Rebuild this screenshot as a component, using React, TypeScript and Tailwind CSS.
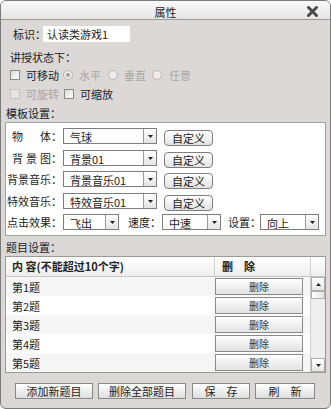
import React from "react";

const TEXT = "text-[11px] leading-[16px] text-[#1c1c1c] whitespace-nowrap";

function Checkbox({ disabled }: { disabled?: boolean }) {
  return (
    <span
      className={
        disabled
          ? "w-[10px] h-[10px] shrink-0 border border-[#c4c1c0] bg-[#e6e3e2]"
          : "w-[10px] h-[10px] shrink-0 border border-[#8a8a8a] bg-gradient-to-br from-[#dcdcdc] to-white"
      }
    />
  );
}

function Radio({ checked }: { checked?: boolean }) {
  return (
    <span className="w-[10px] h-[10px] shrink-0 rounded-full border border-[#b9b6b5] bg-[#eeebea] flex items-center justify-center">
      {checked && <span className="w-[4px] h-[4px] rounded-full bg-[#a3a3a3]" />}
    </span>
  );
}

function Arrow() {
  return (
    <svg width="5" height="3" viewBox="0 0 5 3">
      <path d="M0 0h5L2.5 3z" fill="#222" />
    </svg>
  );
}

function Select({ value, className }: { value: string; className: string }) {
  return (
    <div className={`flex h-[16px] shrink-0 border border-[#7d7d7d] bg-white ${className}`}>
      <span className={`flex-1 pl-[6px] ${TEXT} leading-[14px]`}>{value}</span>
      <span className="w-[13px] border-l border-[#9a9a9a] bg-gradient-to-b from-white to-[#e4e4e4] flex items-center justify-center">
        <Arrow />
      </span>
    </div>
  );
}

function CustomBtn() {
  return (
    <button className="w-[49px] h-[16px] shrink-0 rounded-[4px] border border-[#7e7e7e] bg-gradient-to-b from-white to-[#e2e2e2] text-[11px] leading-[14px] text-[#222]">
      自定义
    </button>
  );
}

function Label({ text }: { text: string }) {
  return <span className={`w-[56px] shrink-0 ${TEXT}`}>{text}</span>;
}

function SpreadLabel({ chars }: { chars: string[] }) {
  return (
    <span className={`w-[56px] shrink-0 flex ${TEXT}`}>
      <span className="w-[44px] pl-[5px] flex justify-between">
        {chars.map((c) => (
          <span key={c}>{c}</span>
        ))}
      </span>
      <span>：</span>
    </span>
  );
}

function BottomBtn({ text, className }: { text: string; className: string }) {
  return (
    <button
      className={`h-[16px] shrink-0 border border-[#8a8a8a] bg-gradient-to-b from-white to-[#dedede] text-[11px] leading-[14px] text-[#222] whitespace-nowrap ${className}`}
    >
      {text}
    </button>
  );
}

const questions = ["第1题", "第2题", "第3题", "第4题", "第5题"];

export default function App() {
  return (
    <div className="w-[331px] h-[409px] flex flex-col overflow-hidden rounded-[6px] border border-[#7a7a7a] bg-[#dcd8d7] font-['Noto_Sans_CJK_SC',sans-serif]">
      {/* Title bar */}
      <div className="relative h-[19px] shrink-0 border-b border-[#9d9a99] bg-gradient-to-b from-[#fbfbfb] to-[#e6e4e4] flex justify-center pt-[3px]">
        <span className="text-[11px] leading-[16px] text-[#222]">属性</span>
        <svg className="absolute right-[12px] top-[5px]" width="11" height="11" viewBox="0 0 11 11">
          <path d="M1.5 1.5l8 8M9.5 1.5l-8 8" stroke="#4b4b4b" strokeWidth="3" strokeLinecap="round" />
        </svg>
      </div>

      <div className="flex flex-col pl-[4px]">
        {/* 标识 */}
        <div className="mt-[6px] h-[16px] flex items-center">
          <span className={`ml-[8px] w-[30px] shrink-0 ${TEXT}`}>标识：</span>
          <span className={`w-[87px] h-[16px] bg-white pl-[4px] ${TEXT}`}>认读类游戏1</span>
        </div>

        <div className={`mt-[7px] h-[16px] ml-[5px] ${TEXT}`}>讲授状态下：</div>

        <div className="mt-[2px] h-[16px] ml-[5px] flex items-center">
          <span className="w-[53px] shrink-0 flex items-center gap-[6px]">
            <Checkbox />
            <span className={TEXT}>可移动</span>
          </span>
          <span className="w-[45px] shrink-0 flex items-center gap-[6px]">
            <Radio checked />
            <span className={`${TEXT} text-[#aaa6a5]`}>水平</span>
          </span>
          <span className="w-[44px] shrink-0 flex items-center gap-[6px]">
            <Radio />
            <span className={`${TEXT} text-[#aaa6a5]`}>垂直</span>
          </span>
          <span className="flex items-center gap-[7px]">
            <Radio />
            <span className={`${TEXT} text-[#aaa6a5]`}>任意</span>
          </span>
        </div>

        <div className="mt-[3px] h-[16px] ml-[5px] flex items-center">
          <span className="w-[54px] shrink-0 flex items-center gap-[6px]">
            <Checkbox disabled />
            <span className={`${TEXT} text-[#aaa6a5]`}>可旋转</span>
          </span>
          <span className="flex items-center gap-[6px]">
            <Checkbox />
            <span className={TEXT}>可缩放</span>
          </span>
        </div>

        <div className={`mt-[3px] h-[16px] ml-[1px] ${TEXT}`}>模板设置：</div>

        {/* Template panel */}
        <div className="mt-[1px] w-[321px] border border-[#a3a0a0] bg-white pl-[1px] pt-[5px] pb-[5px] flex flex-col">
          <div className="h-[16px] flex items-center">
            <SpreadLabel chars={["物", "体"]} />
            <Select value="气球" className="w-[94px]" />
            <span className="ml-[7px]"><CustomBtn /></span>
          </div>
          <div className="mt-[6px] h-[16px] flex items-center">
            <SpreadLabel chars={["背", "景", "图"]} />
            <Select value="背景01" className="w-[94px]" />
            <span className="ml-[7px]"><CustomBtn /></span>
          </div>
          <div className="mt-[5px] h-[16px] flex items-center">
            <Label text="背景音乐：" />
            <Select value="背景音乐01" className="w-[94px]" />
            <span className="ml-[7px]"><CustomBtn /></span>
          </div>
          <div className="mt-[6px] h-[16px] flex items-center">
            <Label text="特效音乐：" />
            <Select value="特效音乐01" className="w-[94px]" />
            <span className="ml-[7px]"><CustomBtn /></span>
          </div>
          <div className="mt-[5px] h-[16px] flex items-center">
            <Label text="点击效果：" />
            <Select value="飞出" className="w-[56px]" />
            <span className={`ml-[9px] w-[34px] shrink-0 ${TEXT}`}>速度：</span>
            <Select value="中速" className="w-[59px]" />
            <span className={`ml-[7px] w-[32px] shrink-0 ${TEXT}`}>设置：</span>
            <Select value="向上" className="w-[59px]" />
          </div>
        </div>

        <div className={`mt-[3px] h-[16px] ml-[1px] ${TEXT}`}>题目设置：</div>

        {/* Question table */}
        <div className="mt-[1px] w-[321px] border border-[#9c9999] bg-white flex flex-col">
          <div className="h-[20px] flex border-b border-[#c9c6c6] bg-gradient-to-b from-white to-[#efeeee]">
            <span className="w-[208px] pl-[6px] text-[11px] leading-[19px] font-bold text-[#222] whitespace-nowrap">内 容(不能超过10个字)</span>
            <span className="w-[96px] border-l border-[#d0cdcd] pl-[7px] text-[11px] leading-[19px] font-bold text-[#222] whitespace-nowrap">删　除</span>
            <span className="flex-1 border-l border-[#d0cdcd]" />
          </div>
          <div className="flex h-[95px]">
            <div className="w-[304px] flex flex-col">
              {questions.map((q, i) => (
                <div
                  key={q}
                  className={`h-[19px] flex items-center ${i % 2 === 0 ? "bg-[#f6f6f6]" : "bg-white"}`}
                >
                  <span className={`w-[209px] pl-[6px] ${TEXT}`}>{q}</span>
                  <button className="w-[88px] h-[17px] border border-[#8a8a8a] bg-gradient-to-b from-white to-[#e2e2e2] text-[10px] leading-[15px] text-[#333]">
                    删除
                  </button>
                </div>
              ))}
            </div>
            {/* scrollbar */}
            <div className="flex-1 border-l border-[#d0cdcd] bg-[#efeeee] flex flex-col">
              <span className="h-[14px] border border-[#b0adad] bg-gradient-to-b from-white to-[#e6e6e6] flex items-center justify-center">
                <svg width="5" height="3" viewBox="0 0 5 3">
                  <path d="M0 3h5L2.5 0z" fill="#222" />
                </svg>
              </span>
              <span className="h-[8px] border border-[#b0adad] bg-gradient-to-r from-white to-[#e4e4e4]" />
              <span className="flex-1" />
              <span className="h-[14px] border border-[#b0adad] bg-gradient-to-b from-white to-[#e6e6e6] flex items-center justify-center">
                <Arrow />
              </span>
            </div>
          </div>
        </div>

        {/* Bottom buttons */}
        <div className="mt-[10px] ml-[10px] flex">
          <BottomBtn text="添加新题目" className="w-[78px]" />
          <BottomBtn text="删除全部题目" className="ml-[5px] w-[88px]" />
          <BottomBtn text="保　存" className="ml-[6px] w-[58px]" />
          <BottomBtn text="刷　新" className="ml-[5px] w-[60px]" />
        </div>
      </div>
    </div>
  );
}
